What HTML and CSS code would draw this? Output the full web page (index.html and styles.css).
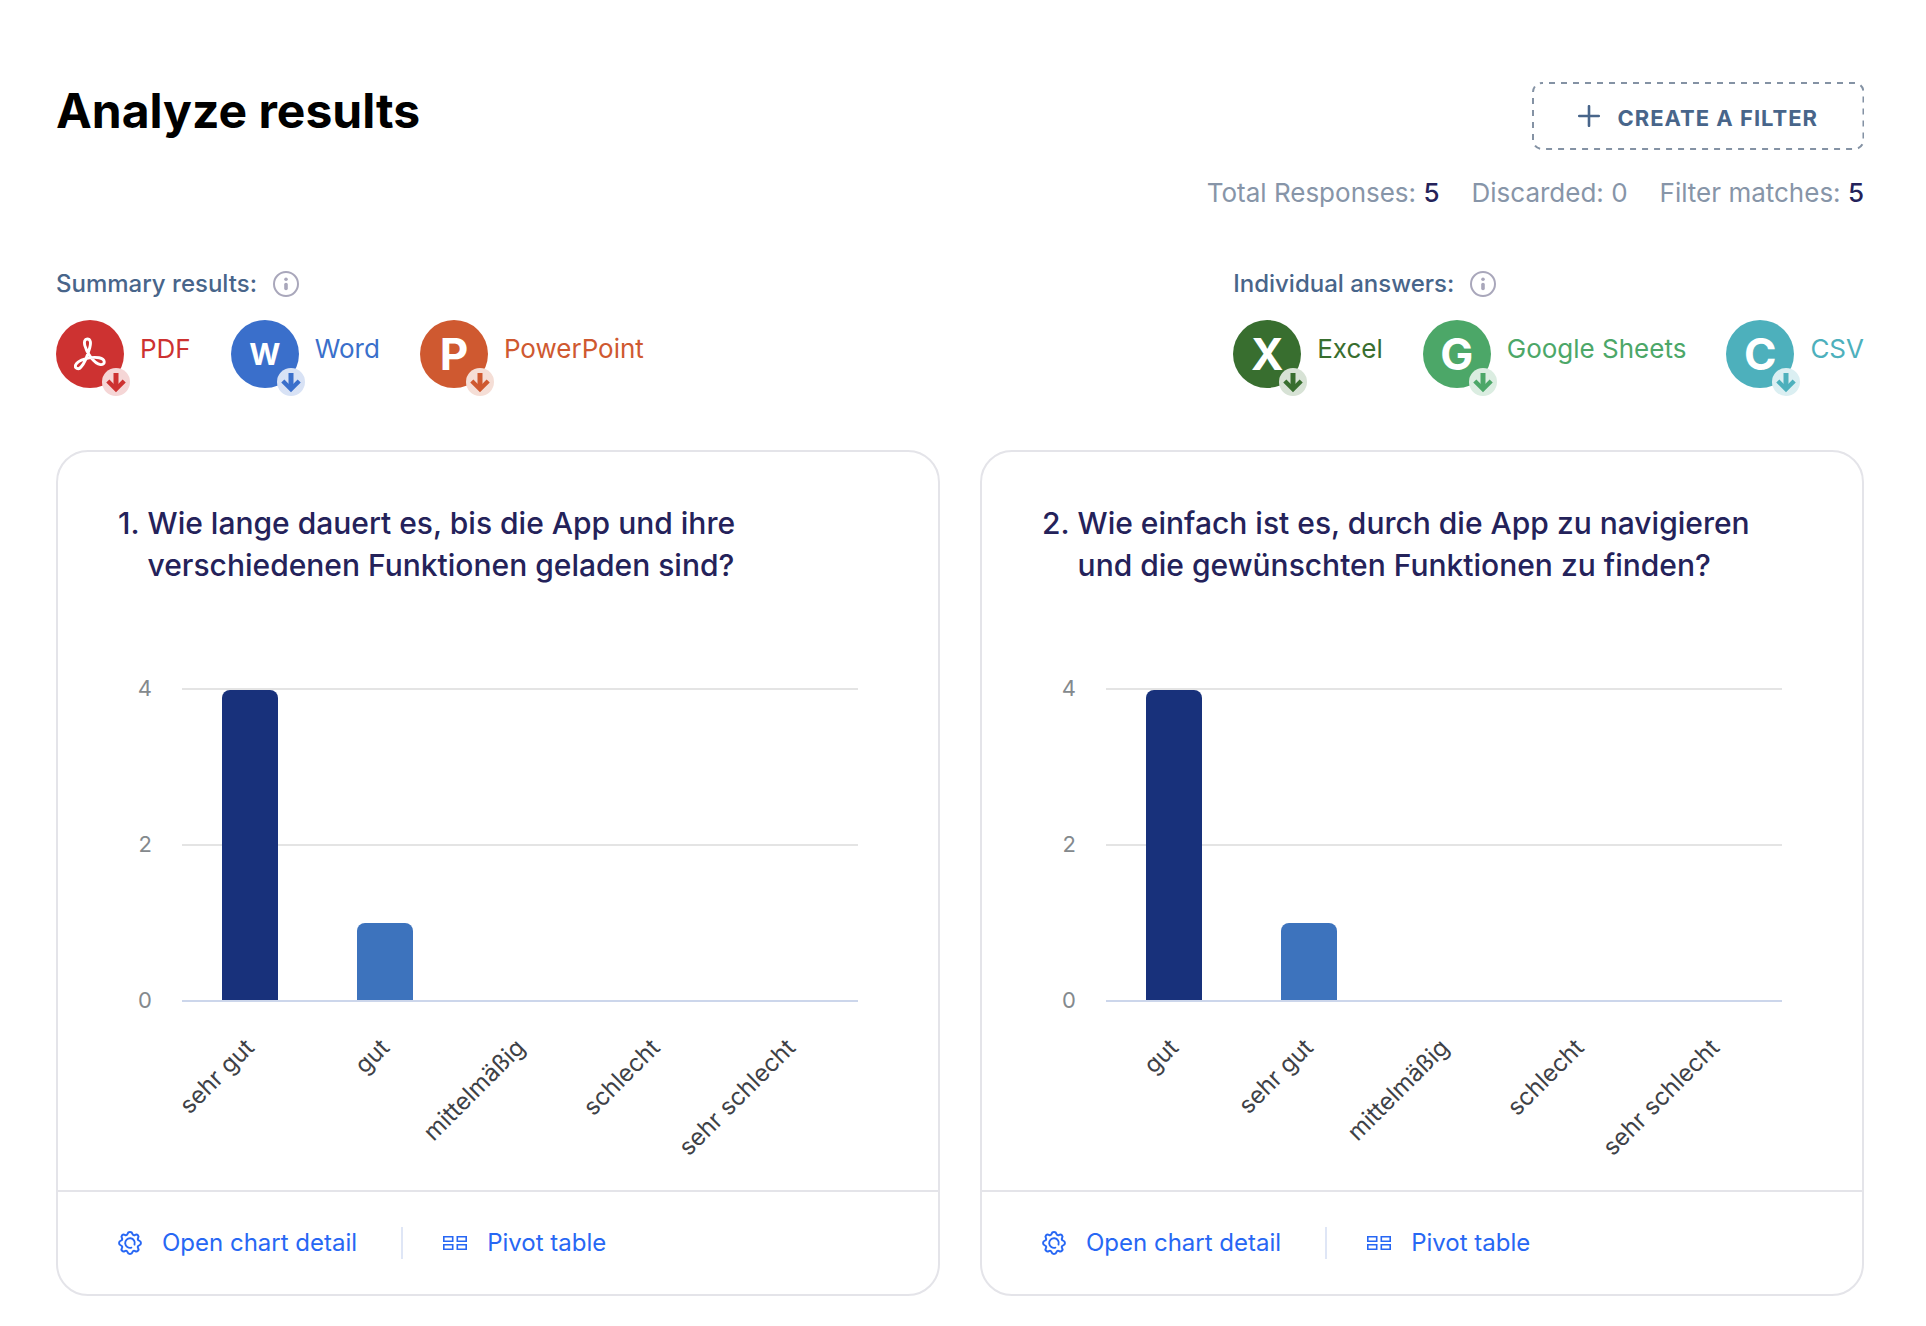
FILE: index.html
```html
<!DOCTYPE html>
<html lang="en">
<head>
<meta charset="utf-8">
<meta name="viewport" content="width=device-width, initial-scale=1">
<title>Analyze results</title>
<link rel="stylesheet" href="styles.css">
</head>
<body>
<svg class="sprite" aria-hidden="true">
  <symbol id="info" viewBox="0 0 26 26">
    <circle cx="13" cy="13" r="12" fill="none" stroke="currentColor" stroke-width="2"/>
    <path d="M13 13.500V17.500" stroke="currentColor" stroke-width="3.600" stroke-linecap="round"/>
    <circle cx="13" cy="8.200" r="1.800" fill="currentColor"/>
  </symbol>
  <symbol id="down" viewBox="0 0 28 28">
    <path d="M14 5V20" stroke="currentColor" stroke-width="5" fill="none"/>
    <path d="M5.800 13L14 21.200L22.200 13" stroke="currentColor" stroke-width="4.400" fill="none"/>
  </symbol>
  <symbol id="gear" viewBox="0 0 24 24">
    <path d="M9.600 2.800C10.200 0.500 13.800 0.500 14.400 2.800C14.800 4.300 16 4.600 17.200 3.900C19.200 2.700 21.400 4.900 20.100 6.900C19.400 8.100 19.800 9.200 21.200 9.600C23.500 10.200 23.500 13.800 21.200 14.400C19.800 14.800 19.400 15.900 20.100 17.100C21.400 19.100 19.200 21.300 17.200 20.100C16 19.400 14.800 19.700 14.400 21.200C13.800 23.500 10.200 23.500 9.600 21.200C9.200 19.700 8 19.400 6.800 20.100C4.800 21.300 2.600 19.100 3.900 17.100C4.600 15.900 4.200 14.800 2.800 14.400C0.500 13.800 0.500 10.200 2.800 9.600C4.200 9.200 4.600 8.100 3.900 6.900C2.600 4.900 4.800 2.700 6.800 3.900C8 4.600 9.200 4.300 9.600 2.800Z" fill="none" stroke="currentColor" stroke-width="2"/>
    <path d="M13.400 16.600A4.800 4.800 0 1 1 16.500 13.600" fill="none" stroke="currentColor" stroke-width="1.900" stroke-linecap="round"/>
  </symbol>
  <symbol id="pivot" viewBox="0 0 24 14">
    <path d="M0.800 0.800H9.700V5.200H0.800ZM14.300 0.800H23.200V5.200H14.300ZM0.800 8.800H9.700V13.200H0.800ZM14.300 8.800H23.200V13.200H14.300Z" fill="none" stroke="currentColor" stroke-width="1.600"/>
  </symbol>
</svg>

<main class="page">
  <header class="top">
    <h1 class="title">Analyze results</h1>
    <div class="tools">
      <button class="create" type="button">
        <svg class="outline" aria-hidden="true"><rect x="1" y="1" rx="9"/></svg>
        <svg class="plus" viewBox="0 0 22 22" aria-hidden="true"><path d="M11 1.200V20.800M1.200 11H20.800" stroke="currentColor" stroke-width="2.600" stroke-linecap="round"/></svg>
        <span>CREATE A FILTER</span>
      </button>
      <p class="stats">
        <span>Total Responses: <strong>5</strong></span>
        <span>Discarded: 0</span>
        <span>Filter matches: <strong>5</strong></span>
      </p>
    </div>
  </header>

  <div class="exports">
    <section class="group">
      <h2 class="group-title">Summary results: <svg class="info"><use href="#info"/></svg></h2>
      <div class="links">
        <a class="export pdf" href="#"><span class="disc"><svg class="acrobat" viewBox="0 0 32 34" aria-hidden="true"><path d="M13.200 2C16.500 2 17.200 5.500 15.800 10.500C14.200 16.500 11 25.500 7 30C4.500 33.200 0.300 31.200 1.700 27.800C4 22.500 17 19.500 25 20.700C32 22 31.500 28.200 26.500 27.600C20 26.500 12.500 15.500 10.800 8.500C9.900 4.500 10.800 2 13.200 2Z" fill="none" stroke="currentColor" stroke-width="2.900" stroke-linejoin="round"/></svg><span class="badge"><svg><use href="#down"/></svg></span></span>PDF</a>
        <a class="export word" href="#"><span class="disc"><span class="letter small">W</span><span class="badge"><svg><use href="#down"/></svg></span></span>Word</a>
        <a class="export ppt" href="#"><span class="disc"><span class="letter">P</span><span class="badge"><svg><use href="#down"/></svg></span></span>PowerPoint</a>
      </div>
    </section>
    <section class="group">
      <h2 class="group-title">Individual answers: <svg class="info"><use href="#info"/></svg></h2>
      <div class="links">
        <a class="export excel" href="#"><span class="disc"><span class="letter">X</span><span class="badge"><svg><use href="#down"/></svg></span></span>Excel</a>
        <a class="export sheets" href="#"><span class="disc"><span class="letter">G</span><span class="badge"><svg><use href="#down"/></svg></span></span>Google Sheets</a>
        <a class="export csv" href="#"><span class="disc"><span class="letter">C</span><span class="badge"><svg><use href="#down"/></svg></span></span>CSV</a>
      </div>
    </section>
  </div>

  <div class="cards">
    <article class="card">
      <div class="card-body">
        <h3 class="question"><span>1.</span><span>Wie lange dauert es, bis die App und ihre verschiedenen Funktionen geladen sind?</span></h3>
        <div class="chart">
          <div class="axis"><span>4</span><span>2</span><span>0</span></div>
          <div class="plot">
            <div class="bars">
              <div class="col"><div class="bar first" style="height:100%"></div></div>
              <div class="col"><div class="bar" style="height:25%"></div></div>
              <div class="col"></div><div class="col"></div><div class="col"></div>
            </div>
            <div class="labels"><div><span>sehr gut</span></div><div><span>gut</span></div><div><span>mittelmäßig</span></div><div><span>schlecht</span></div><div><span>sehr schlecht</span></div></div>
          </div>
        </div>
      </div>
      <footer class="card-foot">
        <a href="#"><svg class="gear"><use href="#gear"/></svg>Open chart detail</a>
        <a href="#"><svg class="pivot"><use href="#pivot"/></svg>Pivot table</a>
      </footer>
    </article>
    <article class="card">
      <div class="card-body">
        <h3 class="question"><span>2.</span><span>Wie einfach ist es, durch die App zu navigieren und die gewünschten Funktionen zu finden?</span></h3>
        <div class="chart">
          <div class="axis"><span>4</span><span>2</span><span>0</span></div>
          <div class="plot">
            <div class="bars">
              <div class="col"><div class="bar first" style="height:100%"></div></div>
              <div class="col"><div class="bar" style="height:25%"></div></div>
              <div class="col"></div><div class="col"></div><div class="col"></div>
            </div>
            <div class="labels"><div><span>gut</span></div><div><span>sehr gut</span></div><div><span>mittelmäßig</span></div><div><span>schlecht</span></div><div><span>sehr schlecht</span></div></div>
          </div>
        </div>
      </div>
      <footer class="card-foot">
        <a href="#"><svg class="gear"><use href="#gear"/></svg>Open chart detail</a>
        <a href="#"><svg class="pivot"><use href="#pivot"/></svg>Pivot table</a>
      </footer>
    </article>
  </div>
</main>
</body>
</html>
```

FILE: styles.css
```css
*, *::before, *::after { box-sizing: border-box; }

body {
  margin: 0;
  background: #fff;
  color: #24225a;
  font-family: Inter, "Liberation Sans", sans-serif;
  font-size: 26px;
}

h1, h2, h3, p { margin: 0; }
a { text-decoration: none; }
svg { display: block; flex: none; }
.sprite { position: absolute; width: 0; height: 0; }

.page { padding: 82px 62px 30px 56px; }

.top {
  display: flex;
  justify-content: space-between;
  align-items: flex-start;
}

.title {
  color: #000;
  font-size: 48px;
  line-height: 58px;
  font-weight: 700;
}

.tools {
  display: flex;
  flex-direction: column;
  align-items: flex-end;
  gap: 28px;
}

.create {
  position: relative;
  display: flex;
  align-items: center;
  gap: 18px;
  height: 68px;
  padding: 0 46px;
  border: 0;
  background: none;
  color: #48658a;
  font: 700 22px/28px Inter, sans-serif;
  letter-spacing: 1px;
}
.create span { padding-top: 4px; }
.plus { width: 22px; height: 22px; }
.outline {
  position: absolute;
  inset: 0;
  width: 100%;
  height: 100%;
}
.outline rect {
  width: calc(100% - 2px);
  height: calc(100% - 2px);
  fill: none;
  stroke: #8492a4;
  stroke-width: 2px;
  stroke-dasharray: 6 6;
  stroke-dashoffset: -7px;
}

.stats {
  display: flex;
  gap: 32px;
  color: #8795a8;
  line-height: 30px;
}
.stats strong { color: #24225a; font-weight: 500; }

.exports {
  display: flex;
  justify-content: space-between;
  margin-top: 60px;
}

.group-title {
  display: flex;
  align-items: center;
  gap: 16px;
  color: #48658a;
  font-size: 24px;
  line-height: 32px;
  font-weight: 500;
}
.info { width: 26px; height: 26px; color: #a9a7bb; }

.links {
  display: flex;
  gap: 40px;
  margin-top: 20px;
}

.export {
  display: flex;
  align-items: flex-start;
  gap: 16px;
  line-height: 58px;
}
.disc {
  position: relative;
  display: flex;
  align-items: center;
  justify-content: center;
  width: 68px;
  height: 68px;
  border-radius: 50%;
  background: currentColor;
}
.letter { color: #fff; font-size: 44px; font-weight: 700; }
.letter.small { font-size: 30px; }
.acrobat { width: 32px; height: 34px; color: #fff; }
.badge {
  position: absolute;
  right: -6px;
  bottom: -8px;
  width: 28px;
  height: 28px;
  border-radius: 50%;
}
.badge svg { width: 28px; height: 28px; }

.pdf { color: #cd3231; }
.pdf .badge { background: #f5d6d6; }
.word { color: #3a6fcb; }
.word .badge { background: #d8e2f5; }
.ppt { color: #cf5930; }
.ppt .badge { background: #f5ded6; }
.excel { color: #386e2f; }
.excel .badge { background: #d7e2d5; }
.sheets { color: #4ca768; }
.sheets .badge { background: #dbede1; }
.csv { color: #4db0bc; }
.csv .badge { background: #dbeff2; }

.cards {
  display: grid;
  grid-template-columns: 1fr 1fr;
  gap: 40px;
  margin-top: 62px;
}

.card {
  border: 2px solid #e4e4e9;
  border-radius: 32px;
}
.card-body { padding: 50px 80px 66px 60px; }

.question {
  display: flex;
  gap: 8px;
  font-size: 30px;
  line-height: 42px;
  font-weight: 500;
}

.chart {
  display: grid;
  grid-template-columns: 34px 1fr;
  gap: 30px;
  margin-top: 102px;
}
.axis {
  display: flex;
  flex-direction: column;
  justify-content: space-between;
  height: 340px;
  margin-top: -14px;
  color: #84898d;
  font-size: 22px;
  line-height: 28px;
  text-align: right;
}
.bars {
  display: grid;
  grid-template-columns: repeat(5, 1fr);
  height: 314px;
  border-top: 2px solid #e4e4e4;
  border-bottom: 2px solid #ccd6eb;
  background: linear-gradient(#e4e4e4, #e4e4e4) 0 154px / 100% 2px no-repeat;
}
.col {
  display: flex;
  align-items: flex-end;
  justify-content: center;
}
.bar {
  width: 56px;
  border-radius: 8px 8px 0 0;
  background: #3d73bd;
}
.bar.first { background: #18317b; }

.labels {
  display: grid;
  grid-template-columns: repeat(5, minmax(0, 1fr));
  height: 122px;
  margin-right: -28px;
  padding: 16px 0 0 28px;
  color: #3e4146;
  font-size: 24px;
  line-height: 28px;
}
.labels div {
  display: flex;
  justify-content: flex-end;
  width: 50%;
}
.labels span {
  flex: none;
  white-space: nowrap;
  transform: rotate(-45deg);
  transform-origin: 100% 50%;
}

.card-foot {
  display: flex;
  align-items: center;
  height: 104px;
  padding: 0 60px;
  border-top: 2px solid #e4e4e9;
  font-size: 24px;
  line-height: 32px;
}
.card-foot a {
  display: flex;
  align-items: center;
  color: #2767f4;
}
.card-foot a + a {
  margin-left: 44px;
  padding-left: 40px;
  border-left: 2px solid #dfe6f6;
}
.gear { width: 24px; height: 24px; margin-right: 20px; }
.pivot { width: 24px; height: 14px; margin-right: 20px; }
```
